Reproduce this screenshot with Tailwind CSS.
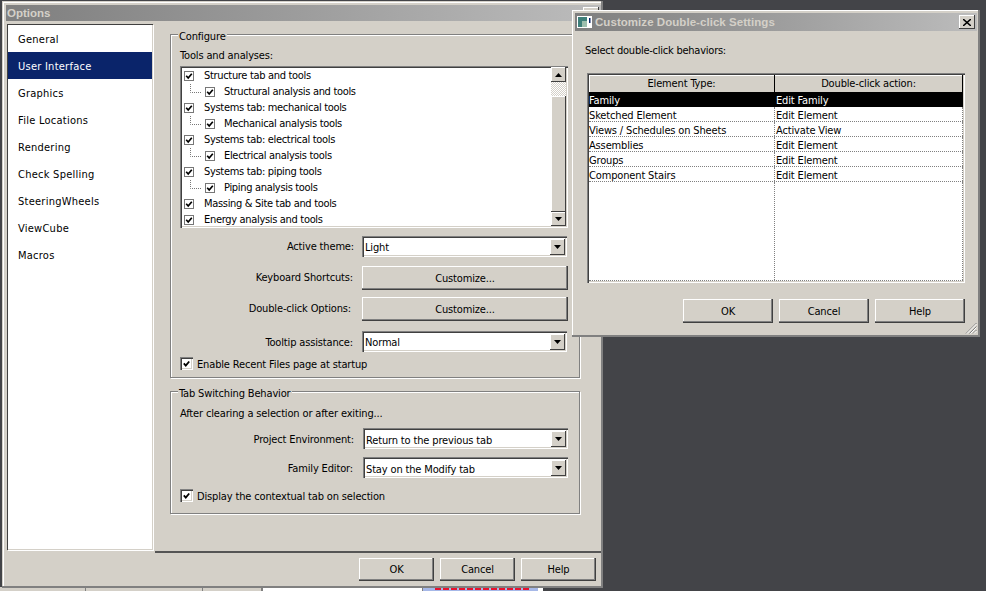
<!DOCTYPE html>
<html>
<head>
<meta charset="utf-8">
<title>Options</title>
<script src="https://cdn.jsdelivr.net/npm/@tailwindcss/browser@4"></script>
</head>
<body class="m-0 overflow-hidden">
<div class="relative w-[986px] h-[591px] overflow-hidden bg-[#434448] font-['DejaVu_Sans',sans-serif] font-stretch-condensed text-[11px] leading-[16px] tracking-[-0.15px] text-[#000]">

  <!-- peek of the application underneath -->
  <div class="absolute left-0 bottom-0 w-[543px] h-[4px] flex bg-[#d4d0c8]">
    <div class="w-[86px] border-r border-[#808080]"></div>
    <div class="w-[117px] border-r border-[#808080]"></div>
    <div class="w-[60px] border-r-2 border-[#808080]"></div>
    <div class="w-[154px] bg-white"></div>
    <div class="w-[6px] bg-white border-r border-[#808080]"></div>
    <div class="w-[115px] bg-[#a6b8e8] pl-[12px]">
      <div class="w-[95px] h-[3px] bg-[repeating-linear-gradient(90deg,#e8112d_0_6px,#a6b8e8_6px_8px)]"></div>
    </div>
    <div class="flex-1 bg-white"></div>
  </div>

  <!-- Options window -->
  <div class="absolute left-[2px] top-[1px] w-[601px] h-[587px] flex flex-col bg-[#d4d0c8] pl-[4px] pr-[2px] pt-[4px] pb-[2px] shadow-[inset_-2px_-2px_0_#808080,inset_1px_1px_0_#d4d0c8,inset_2px_2px_0_#fff]">
    <div class="h-[16px] shrink-0 flex items-center justify-between bg-gradient-to-r from-[#7f7f7f] to-[#bcbcbc] pl-[1px] pr-[2px]">
      <span class="font-bold text-[#d4d0c8] text-[11.5px] tracking-normal font-['Liberation_Sans',sans-serif]">Options</span>
      <div class="w-[16px] h-[14px] bg-[#d4d0c8] shadow-[inset_-1px_-1px_0_#404040,inset_1px_1px_0_#fff] mt-[1px]"></div>
    </div>
    <div class="flex-1 flex min-h-0">
      <!-- nav -->
      <div class="w-[146px] h-[526px] mt-[3px] ml-[1px] shrink-0 bg-white pt-[1px] pl-[1px] pr-[1px] shadow-[inset_1px_1px_0_#404040,inset_-1px_-1px_0_#d4d0c8,1px_1px_0_#fff] tracking-[0.25px]">
        <div class="h-[27px] pl-[10px] pt-[2px] flex items-center">General</div>
        <div class="h-[27px] pl-[10px] pt-[2px] flex items-center bg-[#0a246a] text-white">User Interface</div>
        <div class="h-[27px] pl-[10px] pt-[2px] flex items-center">Graphics</div>
        <div class="h-[27px] pl-[10px] pt-[2px] flex items-center">File Locations</div>
        <div class="h-[27px] pl-[10px] pt-[2px] flex items-center">Rendering</div>
        <div class="h-[27px] pl-[10px] pt-[2px] flex items-center">Check Spelling</div>
        <div class="h-[27px] pl-[10px] pt-[2px] flex items-center">SteeringWheels</div>
        <div class="h-[27px] pl-[10px] pt-[2px] flex items-center">ViewCube</div>
        <div class="h-[27px] pl-[10px] pt-[2px] flex items-center">Macros</div>
      </div>
      <!-- content -->
      <div class="flex-1 pl-[17px] border-l-0">
        <!-- Configure -->
        <div class="relative mt-[13px] w-[410px] h-[344px] border border-[#808080] shadow-[1px_1px_0_#fff,inset_1px_1px_0_#fff] pl-[9px] pt-[13px]">
          <span class="absolute left-[7px] top-[-6px] bg-[#d4d0c8] px-[1px]">Configure</span>
          <div class="h-[16px]">Tools and analyses:</div>
          <div class="mt-[2px] w-[388px] h-[162px] bg-white p-[2px] flex shadow-[inset_1px_1px_0_#808080,inset_2px_2px_0_#404040,inset_-1px_-1px_0_#fff,inset_-2px_-2px_0_#d4d0c8]">
            <div class="flex-1 pl-[2px] tracking-[-0.32px]">
              <div class="h-[16px] flex items-center"><svg class="w-[10px] h-[10px] shrink-0 mr-[10px]" viewBox="0 0 10 10"><rect x=".5" y=".5" width="9" height="9" fill="#fff" stroke="#777"/><path d="M2.2 4.8 4.2 7 7.8 2.8" fill="none" stroke="#000" stroke-width="1.7"/></svg>Structure tab and tools</div>
              <div class="h-[16px] flex items-center"><svg class="w-[21px] h-[16px] shrink-0" viewBox="0 0 21 16"><path d="M6.5 0V8.5H18" fill="none" stroke="#777" stroke-dasharray="1 1"/></svg><svg class="w-[10px] h-[10px] shrink-0 mr-[9px]" viewBox="0 0 10 10"><rect x=".5" y=".5" width="9" height="9" fill="#fff" stroke="#777"/><path d="M2.2 4.8 4.2 7 7.8 2.8" fill="none" stroke="#000" stroke-width="1.7"/></svg>Structural analysis and tools</div>
              <div class="h-[16px] flex items-center"><svg class="w-[10px] h-[10px] shrink-0 mr-[10px]" viewBox="0 0 10 10"><rect x=".5" y=".5" width="9" height="9" fill="#fff" stroke="#777"/><path d="M2.2 4.8 4.2 7 7.8 2.8" fill="none" stroke="#000" stroke-width="1.7"/></svg>Systems tab: mechanical tools</div>
              <div class="h-[16px] flex items-center"><svg class="w-[21px] h-[16px] shrink-0" viewBox="0 0 21 16"><path d="M6.5 0V8.5H18" fill="none" stroke="#777" stroke-dasharray="1 1"/></svg><svg class="w-[10px] h-[10px] shrink-0 mr-[9px]" viewBox="0 0 10 10"><rect x=".5" y=".5" width="9" height="9" fill="#fff" stroke="#777"/><path d="M2.2 4.8 4.2 7 7.8 2.8" fill="none" stroke="#000" stroke-width="1.7"/></svg>Mechanical analysis tools</div>
              <div class="h-[16px] flex items-center"><svg class="w-[10px] h-[10px] shrink-0 mr-[10px]" viewBox="0 0 10 10"><rect x=".5" y=".5" width="9" height="9" fill="#fff" stroke="#777"/><path d="M2.2 4.8 4.2 7 7.8 2.8" fill="none" stroke="#000" stroke-width="1.7"/></svg>Systems tab: electrical tools</div>
              <div class="h-[16px] flex items-center"><svg class="w-[21px] h-[16px] shrink-0" viewBox="0 0 21 16"><path d="M6.5 0V8.5H18" fill="none" stroke="#777" stroke-dasharray="1 1"/></svg><svg class="w-[10px] h-[10px] shrink-0 mr-[9px]" viewBox="0 0 10 10"><rect x=".5" y=".5" width="9" height="9" fill="#fff" stroke="#777"/><path d="M2.2 4.8 4.2 7 7.8 2.8" fill="none" stroke="#000" stroke-width="1.7"/></svg>Electrical analysis tools</div>
              <div class="h-[16px] flex items-center"><svg class="w-[10px] h-[10px] shrink-0 mr-[10px]" viewBox="0 0 10 10"><rect x=".5" y=".5" width="9" height="9" fill="#fff" stroke="#777"/><path d="M2.2 4.8 4.2 7 7.8 2.8" fill="none" stroke="#000" stroke-width="1.7"/></svg>Systems tab: piping tools</div>
              <div class="h-[16px] flex items-center"><svg class="w-[21px] h-[16px] shrink-0" viewBox="0 0 21 16"><path d="M6.5 0V8.5H18" fill="none" stroke="#777" stroke-dasharray="1 1"/></svg><svg class="w-[10px] h-[10px] shrink-0 mr-[9px]" viewBox="0 0 10 10"><rect x=".5" y=".5" width="9" height="9" fill="#fff" stroke="#777"/><path d="M2.2 4.8 4.2 7 7.8 2.8" fill="none" stroke="#000" stroke-width="1.7"/></svg>Piping analysis tools</div>
              <div class="h-[16px] flex items-center"><svg class="w-[10px] h-[10px] shrink-0 mr-[10px]" viewBox="0 0 10 10"><rect x=".5" y=".5" width="9" height="9" fill="#fff" stroke="#777"/><path d="M2.2 4.8 4.2 7 7.8 2.8" fill="none" stroke="#000" stroke-width="1.7"/></svg>Massing &amp; Site tab and tools</div>
              <div class="h-[16px] flex items-center"><svg class="w-[10px] h-[10px] shrink-0 mr-[10px]" viewBox="0 0 10 10"><rect x=".5" y=".5" width="9" height="9" fill="#fff" stroke="#777"/><path d="M2.2 4.8 4.2 7 7.8 2.8" fill="none" stroke="#000" stroke-width="1.7"/></svg>Energy analysis and tools</div>
            </div>
            <!-- scrollbar -->
            <div class="w-[15px] flex flex-col shrink-0 -mt-[1px]">
              <div class="h-[15px] flex items-center justify-center bg-[#d4d0c8] shadow-[inset_-1px_-1px_0_#404040,inset_1px_1px_0_#fff]"><svg class="w-[7px] h-[4px]" viewBox="0 0 7 4"><path d="M3.5 0 7 4H0Z"/></svg></div>
              <div class="h-[14px] bg-[repeating-conic-gradient(#fff_0_25%,#d4d0c8_0_50%)] bg-[length:2px_2px]"></div>
              <div class="flex-1 bg-[#d4d0c8] shadow-[inset_-1px_-1px_0_#404040,inset_1px_1px_0_#fff]"></div>
              <div class="h-[14px] flex items-center justify-center bg-[#d4d0c8] shadow-[inset_-1px_-1px_0_#404040,inset_1px_1px_0_#fff]"><svg class="w-[7px] h-[4px]" viewBox="0 0 7 4"><path d="M0 0H7L3.500 4Z"/></svg></div>
            </div>
          </div>
          <!-- form rows -->
          <div class="mt-[8px] flex items-center h-[21px]">
            <div class="w-[174px] text-right">Active theme:</div>
            <div class="ml-[8px] w-[205px] h-[21px] flex items-center justify-between bg-white pl-[3px] pr-[2px] shadow-[inset_1px_1px_0_#808080,inset_2px_2px_0_#404040,inset_-1px_-1px_0_#fff,inset_-2px_-2px_0_#d4d0c8]"><span class="pt-[2px]">Light</span><div class="w-[15px] h-[16px] flex items-center justify-center bg-[#d4d0c8] shadow-[inset_-1px_-1px_0_#404040,inset_1px_1px_0_#fff]"><svg class="w-[7px] h-[4px]" viewBox="0 0 7 4"><path d="M0 0H7L3.500 4Z"/></svg></div></div>
          </div>
          <div class="mt-[9px] flex items-center h-[24px]">
            <div class="w-[174px] text-right pr-[1px] -mt-[1px]">Keyboard Shortcuts:</div>
            <div class="ml-[8px] w-[206px] h-[24px] pt-[2px] flex items-center justify-center bg-[#d4d0c8] shadow-[inset_-1px_-1px_0_#404040,inset_-2px_-2px_0_#808080,inset_1px_1px_0_#fff]">Customize...</div>
          </div>
          <div class="mt-[7px] flex items-center h-[24px]">
            <div class="w-[174px] text-right pr-[3px]">Double-click Options:</div>
            <div class="ml-[8px] w-[206px] h-[24px] pt-[2px] flex items-center justify-center bg-[#d4d0c8] shadow-[inset_-1px_-1px_0_#404040,inset_-2px_-2px_0_#808080,inset_1px_1px_0_#fff]">Customize...</div>
          </div>
          <div class="mt-[10px] flex items-center h-[21px]">
            <div class="w-[174px] text-right pr-[1px] pt-[2px]">Tooltip assistance:</div>
            <div class="ml-[8px] w-[205px] h-[21px] flex items-center justify-between bg-white pl-[3px] pr-[2px] shadow-[inset_1px_1px_0_#808080,inset_2px_2px_0_#404040,inset_-1px_-1px_0_#fff,inset_-2px_-2px_0_#d4d0c8]"><span class="pt-[2px]">Normal</span><div class="w-[15px] h-[16px] flex items-center justify-center bg-[#d4d0c8] shadow-[inset_-1px_-1px_0_#404040,inset_1px_1px_0_#fff]"><svg class="w-[7px] h-[4px]" viewBox="0 0 7 4"><path d="M0 0H7L3.500 4Z"/></svg></div></div>
          </div>
          <div class="mt-[5px] h-[13px] flex items-center gap-[4px]">
            <div class="w-[13px] h-[13px] bg-white flex items-center justify-center shadow-[inset_1px_1px_0_#808080,inset_2px_2px_0_#404040,inset_-1px_-1px_0_#fff,inset_-2px_-2px_0_#d4d0c8]"><svg class="w-[9px] h-[9px]" viewBox="0 0 10 10"><path d="M2 4.800 4.200 7.300 8 2.800" fill="none" stroke="#000" stroke-width="2"/></svg></div>
            <span class="pt-[2px]">Enable Recent Files page at startup</span>
          </div>
        </div>
        <!-- Tab switching -->
        <div class="relative mt-[13px] w-[410px] h-[123px] border border-[#808080] shadow-[1px_1px_0_#fff,inset_1px_1px_0_#fff] pl-[9px] pt-[14px]">
          <span class="absolute left-[7px] top-[-6px] bg-[#d4d0c8] px-[1px]">Tab Switching Behavior</span>
          <div class="h-[16px]">After clearing a selection or after exiting...</div>
          <div class="mt-[6px] flex items-center h-[21px]">
            <div class="w-[175px] text-right pr-[1px] pt-[2px]">Project Environment:</div>
            <div class="ml-[8px] w-[205px] h-[21px] flex items-center justify-between bg-white pl-[3px] pr-[2px] shadow-[inset_1px_1px_0_#808080,inset_2px_2px_0_#404040,inset_-1px_-1px_0_#fff,inset_-2px_-2px_0_#d4d0c8]"><span class="pt-[4px]">Return to the previous tab</span><div class="w-[15px] h-[16px] flex items-center justify-center bg-[#d4d0c8] shadow-[inset_-1px_-1px_0_#404040,inset_1px_1px_0_#fff]"><svg class="w-[7px] h-[4px]" viewBox="0 0 7 4"><path d="M0 0H7L3.500 4Z"/></svg></div></div>
          </div>
          <div class="mt-[8px] flex items-center h-[21px]">
            <div class="w-[175px] text-right pr-[2px] pt-[2px]">Family Editor:</div>
            <div class="ml-[8px] w-[205px] h-[21px] flex items-center justify-between bg-white pl-[3px] pr-[2px] shadow-[inset_1px_1px_0_#808080,inset_2px_2px_0_#404040,inset_-1px_-1px_0_#fff,inset_-2px_-2px_0_#d4d0c8]"><span class="pt-[4px]">Stay on the Modify tab</span><div class="w-[15px] h-[16px] flex items-center justify-center bg-[#d4d0c8] shadow-[inset_-1px_-1px_0_#404040,inset_1px_1px_0_#fff]"><svg class="w-[7px] h-[4px]" viewBox="0 0 7 4"><path d="M0 0H7L3.500 4Z"/></svg></div></div>
          </div>
          <div class="mt-[11px] h-[13px] flex items-center gap-[4px]">
            <div class="w-[13px] h-[13px] bg-white flex items-center justify-center shadow-[inset_1px_1px_0_#808080,inset_2px_2px_0_#404040,inset_-1px_-1px_0_#fff,inset_-2px_-2px_0_#d4d0c8]"><svg class="w-[9px] h-[9px]" viewBox="0 0 10 10"><path d="M2 4.800 4.200 7.300 8 2.800" fill="none" stroke="#000" stroke-width="2"/></svg></div>
            <span class="pt-[2px]">Display the contextual tab on selection</span>
          </div>
        </div>
      </div>
    </div>
    <!-- footer -->
    <div class="shrink-0 h-[35px] ml-[149px] border-t-2 border-[#555] flex justify-end gap-[6px] pt-[5px] pr-[5px]">
      <div class="w-[75px] h-[23px] flex items-center justify-center bg-[#d4d0c8] shadow-[inset_-1px_-1px_0_#404040,inset_-2px_-2px_0_#808080,inset_1px_1px_0_#fff]">OK</div>
      <div class="w-[75px] h-[23px] flex items-center justify-center bg-[#d4d0c8] shadow-[inset_-1px_-1px_0_#404040,inset_-2px_-2px_0_#808080,inset_1px_1px_0_#fff]">Cancel</div>
      <div class="w-[75px] h-[23px] flex items-center justify-center bg-[#d4d0c8] shadow-[inset_-1px_-1px_0_#404040,inset_-2px_-2px_0_#808080,inset_1px_1px_0_#fff]">Help</div>
    </div>
  </div>

  <!-- Customize dialog -->
  <div class="absolute left-[572px] top-[10px] w-[408px] h-[327px] flex flex-col bg-[#d4d0c8] p-[3px] shadow-[inset_-1px_-1px_0_#808080,inset_-2px_-2px_0_#808080,inset_1px_1px_0_#fff]">
    <div class="h-[18px] shrink-0 flex items-center bg-gradient-to-r from-[#7f7f7f] to-[#bcbcbc] pl-[2px] pr-[2px]">
      <svg class="w-[15px] h-[12px] mr-[3px] shrink-0" viewBox="0 0 15 12"><rect width="15" height="12" fill="#fff"/><rect x="1" y="1" width="9" height="10" fill="#3e7f7a"/><rect x="5" y="5" width="5" height="6" fill="#9dbfae"/><rect x="12" y="2" width="1.500" height="5" fill="#0a246a"/></svg>
      <span class="font-bold text-[#d4d0c8] text-[11.5px] tracking-[0.05px] font-['Liberation_Sans',sans-serif]">Customize Double-click Settings</span>
      <div class="ml-auto w-[16px] h-[14px] flex items-center justify-center bg-[#d4d0c8] shadow-[inset_-1px_-1px_0_#404040,inset_1px_1px_0_#fff]"><svg class="w-[8px] h-[7px]" viewBox="0 0 8 7"><path d="M0 0 8 7M8 0 0 7" fill="none" stroke="#000" stroke-width="1.500"/></svg></div>
    </div>
    <div class="h-[16px] mt-[12px] ml-[10px] tracking-[-0.24px]">Select double-click behaviors:</div>
    <!-- table -->
    <div class="mt-[14px] ml-[12px] w-[378px] h-[210px] bg-white p-[2px] flex flex-col shadow-[inset_1px_1px_0_#808080,inset_2px_2px_0_#404040,inset_-1px_-1px_0_#fff,inset_-2px_-2px_0_#d4d0c8]">
      <div class="h-[17px] shrink-0 flex bg-[#d4d0c8] shadow-[inset_1px_1px_0_#fff] pt-[1px]">
        <div class="w-[186px] border-r border-black text-center -mt-[1px] pt-[1px]">Element Type:</div>
        <div class="flex-1 text-center border-r border-black -mt-[1px] pt-[1px]">Double-click action:</div>
      </div>
      <div class="h-[15px] shrink-0 flex bg-black text-white leading-[17px]">
        <div class="w-[186px]">Family</div>
        <div class="flex-1 pl-[1px]">Edit Family</div>
      </div>
      <div class="h-[15px] shrink-0 flex border-b border-dotted border-[#808080] leading-[17px]">
        <div class="w-[186px] border-r border-dotted border-[#808080]">Sketched Element</div>
        <div class="flex-1 pl-[1px] border-r border-dotted border-[#808080]">Edit Element</div>
      </div>
      <div class="h-[15px] shrink-0 flex border-b border-dotted border-[#808080] leading-[17px]">
        <div class="w-[186px] border-r border-dotted border-[#808080]">Views / Schedules on Sheets</div>
        <div class="flex-1 pl-[1px] border-r border-dotted border-[#808080]">Activate View</div>
      </div>
      <div class="h-[15px] shrink-0 flex border-b border-dotted border-[#808080] leading-[17px]">
        <div class="w-[186px] border-r border-dotted border-[#808080]">Assemblies</div>
        <div class="flex-1 pl-[1px] border-r border-dotted border-[#808080]">Edit Element</div>
      </div>
      <div class="h-[15px] shrink-0 flex border-b border-dotted border-[#808080] leading-[17px]">
        <div class="w-[186px] border-r border-dotted border-[#808080]">Groups</div>
        <div class="flex-1 pl-[1px] border-r border-dotted border-[#808080]">Edit Element</div>
      </div>
      <div class="h-[15px] shrink-0 flex border-b border-dotted border-[#808080] leading-[17px]">
        <div class="w-[186px] border-r border-dotted border-[#808080]">Component Stairs</div>
        <div class="flex-1 pl-[1px] border-r border-dotted border-[#808080]">Edit Element</div>
      </div>
      <div class="flex-1 flex border-b border-dotted border-[#808080]">
        <div class="w-[186px] border-r border-dotted border-[#808080]"></div>
        <div class="flex-1 border-r border-dotted border-[#808080]"></div>
      </div>
    </div>
    <div class="mt-[16px] ml-[108px] flex gap-[6px]">
      <div class="w-[90px] h-[24px] pt-[2px] flex items-center justify-center bg-[#d4d0c8] shadow-[inset_-1px_-1px_0_#404040,inset_-2px_-2px_0_#808080,inset_1px_1px_0_#fff]">OK</div>
      <div class="w-[90px] h-[24px] pt-[2px] flex items-center justify-center bg-[#d4d0c8] shadow-[inset_-1px_-1px_0_#404040,inset_-2px_-2px_0_#808080,inset_1px_1px_0_#fff]">Cancel</div>
      <div class="w-[90px] h-[24px] pt-[2px] flex items-center justify-center bg-[#d4d0c8] shadow-[inset_-1px_-1px_0_#404040,inset_-2px_-2px_0_#808080,inset_1px_1px_0_#fff]">Help</div>
    </div>
    <svg class="absolute right-[3px] bottom-[3px] w-[12px] h-[12px]" viewBox="0 0 12 12"><path d="M11.500 1 1 11.500M11.500 4.500 4.500 11.500M11.500 8 8 11.500" fill="none" stroke="#808080"/><path d="M11.500 2 2 11.500M11.500 5.500 5.500 11.500M11.500 9 9 11.500" fill="none" stroke="#fff"/></svg>
  </div>
</div>
</body>
</html>
